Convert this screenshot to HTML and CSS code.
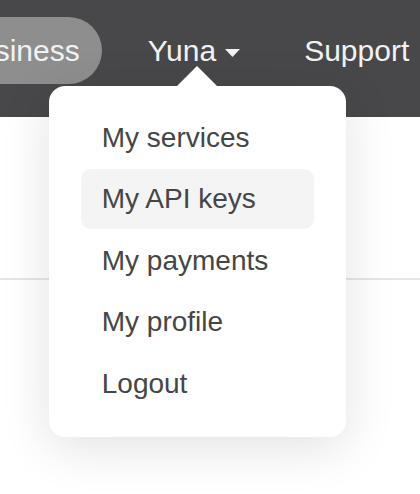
FILE: index.html
```html
<!DOCTYPE html>
<html>
<head>
<meta charset="utf-8">
<link rel="stylesheet" href="styles.css">
</head>
<body>
<div class="page">
  <header class="topbar">
    <nav class="nav">
      <a class="nav-item pill">Business</a>
      <div class="nav-item user">
        <span>Yuna</span>
        <svg class="caret" width="15" height="8" viewBox="0 0 15 8"><path d="M0 0 L15 0 L7.5 8 Z" fill="#f2f2f2"/></svg>
        <div class="dropdown">
          <span class="arrow"></span>
          <ul class="menu">
            <li class="menu-item">My services</li>
            <li class="menu-item active">My API keys</li>
            <li class="menu-item">My payments</li>
            <li class="menu-item">My profile</li>
            <li class="menu-item">Logout</li>
          </ul>
        </div>
      </div>
      <a class="nav-item support">Support</a>
    </nav>
  </header>
  <section class="content"></section>
</div>
</body>
</html>
```

FILE: styles.css
```css
html, body {
  margin: 0;
  padding: 0;
  background: #ffffff;
}
.page {
  width: 420px;
  height: 494px;
  overflow: hidden;
  position: relative;
  font-family: "Liberation Sans", Arial, Helvetica, sans-serif;
}
.topbar {
  height: 117px;
  background: #48484a;
}
.nav {
  display: flex;
  align-items: center;
  height: 117px;
  margin-left: -66px;
  padding-bottom: 16px;
  box-sizing: border-box;
}
.nav-item {
  font-size: 30px;
  color: #f2f2f2;
  white-space: nowrap;
}
.pill {
  display: flex;
  align-items: center;
  height: 67px;
  padding: 0 22px 0 24px;
  background: #8e8e8e;
  border-radius: 34px;
  box-sizing: border-box;
}
.user {
  position: relative;
  display: flex;
  align-items: center;
  margin-left: 46px;
}
.caret {
  margin-left: 9px;
  margin-top: 4px;
}
.support {
  margin-left: 64px;
}
.dropdown {
  position: absolute;
  left: -99px;
  top: 52px;
  width: 297px;
  height: 351px;
  background: #ffffff;
  border-radius: 16px;
  box-shadow: 0 10px 50px rgba(0, 0, 0, 0.12);
  z-index: 2;
}
.arrow {
  position: absolute;
  left: 128px;
  top: -20px;
  width: 0;
  height: 0;
  border-left: 20px solid transparent;
  border-right: 20px solid transparent;
  border-bottom: 20px solid #ffffff;
}
.menu {
  list-style: none;
  margin: 0;
  padding: 22px 32px 22px;
  display: flex;
  flex-direction: column;
  gap: 1.5px;
}
.menu-item {
  height: 60px;
  line-height: 60px;
  padding-left: 21px;
  font-size: 28px;
  color: #454545;
  border-radius: 10px;
}
.menu-item.active {
  background: #f4f4f4;
}
.content {
  height: 163px;
  border-bottom: 2px solid #e6e6e6;
  box-sizing: border-box;
}
```
